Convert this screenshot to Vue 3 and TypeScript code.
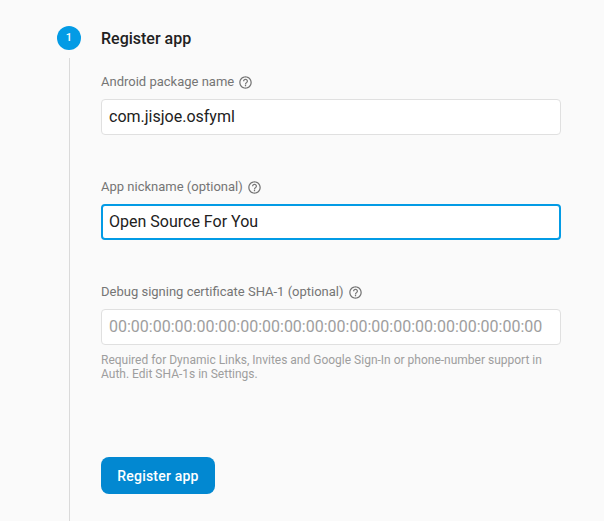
<script setup lang="ts">
interface Field {
  label: string
  value: string
  placeholder: string
  focused: boolean
}
const fields: Field[] = [
  { label: 'Android package name', value: 'com.jisjoe.osfyml', placeholder: '', focused: false },
  { label: 'App nickname (optional)', value: 'Open Source For You', placeholder: '', focused: true },
  {
    label: 'Debug signing certificate SHA-1 (optional)',
    value: '',
    placeholder: '00:00:00:00:00:00:00:00:00:00:00:00:00:00:00:00:00:00:00:00',
    focused: false,
  },
]
</script>

<template>
  <div class="page">
    <div class="rail">
      <div class="badge">1</div>
      <div class="line"></div>
    </div>
    <main class="content">
      <h1 class="title">Register app</h1>
      <div v-for="f in fields" :key="f.label" class="field">
        <div class="label">
          <span>{{ f.label }}</span>
          <svg class="help" viewBox="0 0 24 24" width="15" height="15" fill="#757575">
            <path d="M11 18h2v-2h-2v2zm1-16C6.48 2 2 6.48 2 12s4.48 10 10 10 10-4.48 10-10S17.52 2 12 2zm0 18c-4.41 0-8-3.59-8-8s3.59-8 8-8 8 3.59 8 8-3.59 8-8 8zm0-14c-2.21 0-4 1.79-4 4h2c0-1.1.9-2 2-2s2 .9 2 2c0 2-3 1.75-3 5h2c0-2.25 3-2.5 3-5 0-2.21-1.79-4-4-4z" />
          </svg>
        </div>
        <div class="input" :class="{ focused: f.focused, empty: !f.value }">{{ f.value || f.placeholder }}</div>
      </div>
      <p class="hint">Required for Dynamic Links, Invites and Google Sign-In or phone-number support in Auth. Edit SHA-1s in Settings.</p>
      <button class="submit" type="button">Register app</button>
    </main>
  </div>
</template>

<style>
html, body { margin: 0; background: #fafafa; }
</style>

<style scoped>
.page {
  display: flex;
  height: 521px;
  width: 604px;
  overflow: hidden;
  background: #fafafa;
  font-family: Roboto, "Liberation Sans", sans-serif;
  box-sizing: border-box;
  padding-left: 57px;
}
.rail {
  width: 24px;
  padding-top: 26px;
  display: flex;
  flex-direction: column;
  align-items: center;
  flex: none;
}
.badge {
  width: 24px;
  height: 24px;
  border-radius: 50%;
  background: #039be5;
  color: #fff;
  font-size: 11px;
  font-weight: 500;
  line-height: 24px;
  text-align: center;
}
.line {
  flex: 1;
  width: 1px;
  margin-top: 8px;
  background: #dadada;
}
.content {
  margin-left: 20px;
  width: 460px;
}
.title {
  margin: 0;
  padding-top: 29px;
  font-size: 16px;
  line-height: 20px;
  font-weight: 500;
  color: #212121;
}
.field {
  height: 105px;
}
.field:first-of-type {
  margin-top: 24px;
}
.label {
  display: flex;
  align-items: center;
  gap: 4px;
  height: 18px;
  font-size: 13px;
  line-height: 18px;
  color: #757575;
  margin-bottom: 8px;
}
.help {
  flex: none;
}
.input {
  box-sizing: border-box;
  height: 36px;
  padding: 0 7px;
  background: #fff;
  border: 1px solid #e0e0e0;
  border-radius: 4px;
  font-size: 16px;
  line-height: 34px;
  color: #212121;
  white-space: nowrap;
  overflow: hidden;
}
.input.focused {
  border: 2px solid #039be5;
  line-height: 32px;
  padding: 0 6px;
}
.input.empty {
  color: #9e9e9e;
}
.hint {
  margin: -35px 0 0;
  font-size: 12px;
  line-height: 14px;
  color: #9e9e9e;
}
.submit {
  display: block;
  margin-top: 76px;
  width: 114px;
  height: 37px;
  padding: 0;
  border: 0;
  border-radius: 8px;
  background: #0288d1;
  color: #fff;
  font-family: inherit;
  font-size: 14px;
  font-weight: 500;
  letter-spacing: 0.2px;
}
</style>
